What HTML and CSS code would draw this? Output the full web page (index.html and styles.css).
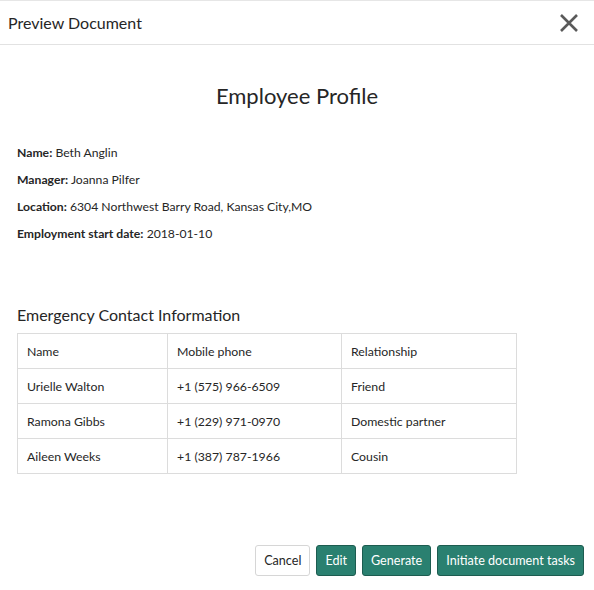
FILE: index.html
```html
<!DOCTYPE html>
<html>
<head>
<meta charset="utf-8">
<link rel="stylesheet" href="styles.css">
</head>
<body>
<div class="modal">
  <header class="modal-header">
    <h1 class="modal-title">Preview Document</h1>
    <button class="close" aria-label="Close">
      <svg width="20" height="20" viewBox="0 0 20 20"><path d="M2 2 L18 18 M18 2 L2 18" stroke="#5a5a5a" stroke-width="2.6" stroke-linecap="butt"/></svg>
    </button>
  </header>
  <main class="modal-body">
    <h2 class="doc-title">Employee Profile</h2>
    <div class="fields">
      <p class="field"><b>Name:</b> Beth Anglin</p>
      <p class="field"><b>Manager:</b> Joanna Pilfer</p>
      <p class="field"><b>Location:</b> 6304 Northwest Barry Road, Kansas City,MO</p>
      <p class="field"><b>Employment start date:</b> 2018-01-10</p>
    </div>
    <h3 class="section-title">Emergency Contact Information</h3>
    <table class="contacts">
      <thead>
        <tr><th class="c1">Name</th><th class="c2">Mobile phone</th><th>Relationship</th></tr>
      </thead>
      <tbody>
        <tr><td>Urielle Walton</td><td>+1 (575) 966-6509</td><td>Friend</td></tr>
        <tr><td>Ramona Gibbs</td><td>+1 (229) 971-0970</td><td>Domestic partner</td></tr>
        <tr><td>Aileen Weeks</td><td>+1 (387) 787-1966</td><td>Cousin</td></tr>
      </tbody>
    </table>
  </main>
  <footer class="modal-footer">
    <button class="btn btn-default">Cancel</button>
    <button class="btn btn-primary">Edit</button>
    <button class="btn btn-primary">Generate</button>
    <button class="btn btn-primary">Initiate document tasks</button>
  </footer>
</div>
</body>
</html>
```
FILE: styles.css
```css
html, body {
  margin: 0;
  padding: 0;
  background: #fff;
}
body {
  font-family: Lato, "Liberation Sans", sans-serif;
  color: #262626;
  width: 594px;
  height: 590px;
  overflow: hidden;
}
.modal {
  display: flex;
  flex-direction: column;
  height: 590px;
  border-top: 1px solid #e6e6e6;
  box-sizing: border-box;
}
.modal-header {
  display: flex;
  align-items: center;
  justify-content: space-between;
  height: 43px;
  padding: 0 15px 0 8px;
  border-bottom: 1px solid #e2e2e2;
}
.modal-title {
  margin: 0;
  font-size: 16px;
  font-weight: 400;
}
.close {
  border: 0;
  background: none;
  padding: 0;
  width: 20px;
  height: 20px;
  display: flex;
}
.modal-body {
  padding: 0 17px;
  flex: 1;
}
.doc-title {
  margin: 38px 0 0;
  text-align: center;
  font-size: 22px;
  font-weight: 400;
  line-height: 26px;
}
.fields {
  margin-top: 36px;
  display: flex;
  flex-direction: column;
  gap: 11px;
}
.field {
  margin: 0;
  font-size: 12.2px;
  line-height: 16px;
}
.field b {
  font-weight: 700;
}
.section-title {
  margin: 63px 0 8px;
  font-size: 16px;
  font-weight: 400;
  line-height: 20px;
}
.contacts {
  border-collapse: collapse;
  width: 500px;
  font-size: 12.3px;
}
.contacts th, .contacts td {
  border: 1px solid #dcdcdc;
  height: 34px;
  padding: 0 9px;
  text-align: left;
  font-weight: 400;
}
.contacts th.c1 { width: 131px; }
.contacts th.c2 { width: 155px; }
.modal-footer {
  display: flex;
  justify-content: flex-end;
  gap: 6px;
  padding: 0 10px 14px;
}
.btn {
  font-family: Lato, "Liberation Sans", sans-serif;
  font-size: 12.6px;
  height: 31px;
  padding: 0 8px;
  border-radius: 3px;
}
.btn-default {
  background: #fff;
  border: 1px solid #d6d6d6;
  color: #262626;
}
.btn-primary {
  background: #2a8070;
  border: 1px solid #1d5c50;
  color: #fff;
}
```
